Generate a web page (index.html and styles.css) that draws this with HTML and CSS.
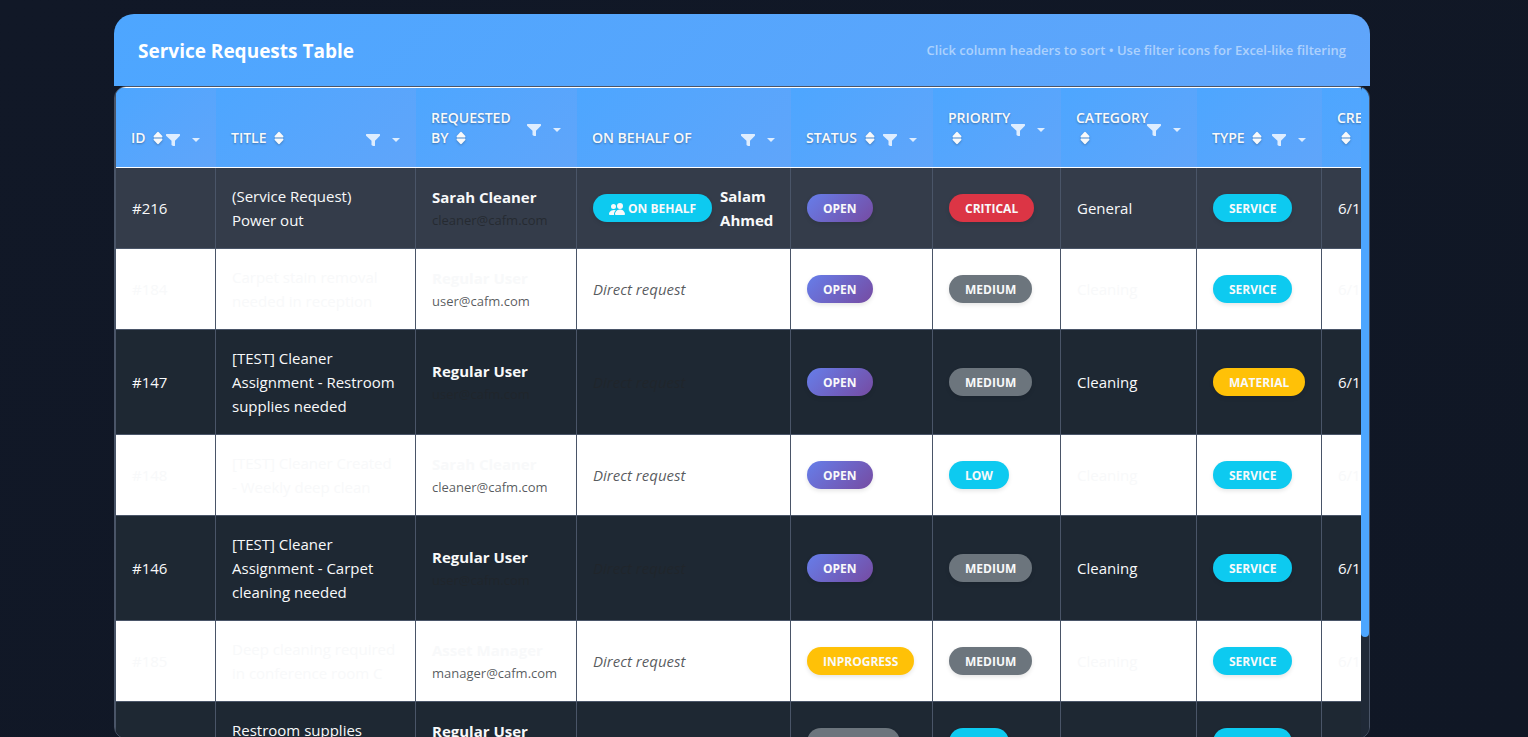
FILE: index.html
```html
<!DOCTYPE html>
<html lang="en">
<head>
<meta charset="utf-8">
<title>Service Requests Table</title>
<link rel="stylesheet" href="styles.css">
</head>
<body>
<svg class="sprite" aria-hidden="true">
  <symbol id="sort" viewBox="0 0 10 14"><path d="M5 .8q.4 0 .8.400L9.300 5q.6 1.300-.6 1.400H1.300Q.1 6.300.7 5L4.200 1.200Q4.600.8 5 .8zM1.300 7.600h7.400q1.200.1.600 1.400L5.800 12.800q-.8.800-1.600 0L.7 9q-.6-1.300.6-1.400z"/></symbol>
  <symbol id="funnel" viewBox="0 0 14 12"><path d="M.5 0h13q.5 0 .5.500v1q0 .3-.3.600L9 6.800V11.500q0 .5-.5.500H7L5.500 11V6.800L.3 2.100Q0 1.800 0 1.500v-1Q0 0 .5 0z"/></symbol>
  <symbol id="people" viewBox="0 0 16 14"><path d="M7 13s-1 0-1-1 1-4.500 5-4.500 5 3.500 5 4.500-1 1-1 1zm4-6a3 3 0 1 0 0-6 3 3 0 0 0 0 6M5.200 13A2.200 2.200 0 0 1 5 12c0-1.400.7-2.800 1.900-3.700A6.300 6.300 0 0 0 5 8c-4 0-5 3-5 4s1 1 1 1zM4.500 7a2.500 2.500 0 1 0 0-5 2.500 2.500 0 0 0 0 5"/></symbol>
</svg>
<main class="card">
  <header class="card-header">
    <h1>Service Requests Table</h1>
    <small>Click column headers to sort • Use filter icons for Excel-like filtering</small>
  </header>
  <div class="table-frame">
    <div class="table-scroll">
      <table>
        <colgroup><col class="c-id"><col class="c-title"><col class="c-by"><col class="c-behalf"><col class="c-status"><col class="c-priority"><col class="c-category"><col class="c-type"><col class="c-created"></colgroup>
        <thead>
          <tr>
            <th><div class="head"><span>ID <svg class="sort"><use href="#sort"/></svg></span><button class="filter" aria-label="Filter ID"><svg class="funnel"><use href="#funnel"/></svg></button></div></th>
            <th><div class="head"><span>Title <svg class="sort"><use href="#sort"/></svg></span><button class="filter" aria-label="Filter title"><svg class="funnel"><use href="#funnel"/></svg></button></div></th>
            <th><div class="head"><span>Requested<br>By <svg class="sort"><use href="#sort"/></svg></span><button class="filter" aria-label="Filter requested by"><svg class="funnel"><use href="#funnel"/></svg></button></div></th>
            <th><div class="head"><span>On Behalf Of</span><button class="filter" aria-label="Filter on behalf of"><svg class="funnel"><use href="#funnel"/></svg></button></div></th>
            <th><div class="head"><span>Status <svg class="sort"><use href="#sort"/></svg></span><button class="filter" aria-label="Filter status"><svg class="funnel"><use href="#funnel"/></svg></button></div></th>
            <th><div class="head"><span>Priority<br><svg class="sort"><use href="#sort"/></svg></span><button class="filter" aria-label="Filter priority"><svg class="funnel"><use href="#funnel"/></svg></button></div></th>
            <th><div class="head"><span>Category<br><svg class="sort"><use href="#sort"/></svg></span><button class="filter" aria-label="Filter category"><svg class="funnel"><use href="#funnel"/></svg></button></div></th>
            <th><div class="head"><span>Type <svg class="sort"><use href="#sort"/></svg></span><button class="filter" aria-label="Filter type"><svg class="funnel"><use href="#funnel"/></svg></button></div></th>
            <th><div class="head"><span>Created<br><svg class="sort"><use href="#sort"/></svg></span><button class="filter" aria-label="Filter created"><svg class="funnel"><use href="#funnel"/></svg></button></div></th>
          </tr>
        </thead>
        <tbody>
          <tr class="hovered">
            <td>#216</td><td>(Service Request) Power out</td>
            <td><strong>Sarah Cleaner</strong><small>cleaner@cafm.com</small></td>
            <td><div class="behalf"><span class="badge info"><svg class="people"><use href="#people"/></svg>On Behalf</span><strong>Salam Ahmed</strong></div></td>
            <td><span class="badge open">Open</span></td><td><span class="badge danger">Critical</span></td>
            <td>General</td><td><span class="badge info">Service</span></td><td>6/1</td>
          </tr>
          <tr class="light">
            <td>#184</td><td>Carpet stain removal needed in reception</td>
            <td><strong>Regular User</strong><small>user@cafm.com</small></td>
            <td><em>Direct request</em></td>
            <td><span class="badge open">Open</span></td><td><span class="badge neutral">Medium</span></td>
            <td>Cleaning</td><td><span class="badge info">Service</span></td><td>6/1</td>
          </tr>
          <tr>
            <td>#147</td><td>[TEST] Cleaner Assignment - Restroom supplies needed</td>
            <td><strong>Regular User</strong><small>user@cafm.com</small></td>
            <td><em>Direct request</em></td>
            <td><span class="badge open">Open</span></td><td><span class="badge neutral">Medium</span></td>
            <td>Cleaning</td><td><span class="badge warning">Material</span></td><td>6/1</td>
          </tr>
          <tr class="light">
            <td>#148</td><td>[TEST] Cleaner Created - Weekly deep clean</td>
            <td><strong>Sarah Cleaner</strong><small>cleaner@cafm.com</small></td>
            <td><em>Direct request</em></td>
            <td><span class="badge open">Open</span></td><td><span class="badge info">Low</span></td>
            <td>Cleaning</td><td><span class="badge info">Service</span></td><td>6/1</td>
          </tr>
          <tr>
            <td>#146</td><td>[TEST] Cleaner Assignment - Carpet cleaning needed</td>
            <td><strong>Regular User</strong><small>user@cafm.com</small></td>
            <td><em>Direct request</em></td>
            <td><span class="badge open">Open</span></td><td><span class="badge neutral">Medium</span></td>
            <td>Cleaning</td><td><span class="badge info">Service</span></td><td>6/1</td>
          </tr>
          <tr class="light">
            <td>#185</td><td>Deep cleaning required in conference room C</td>
            <td><strong>Asset Manager</strong><small>manager@cafm.com</small></td>
            <td><em>Direct request</em></td>
            <td><span class="badge warning">InProgress</span></td><td><span class="badge neutral">Medium</span></td>
            <td>Cleaning</td><td><span class="badge info">Service</span></td><td>6/1</td>
          </tr>
          <tr>
            <td></td><td>Restroom supplies needed</td>
            <td><strong>Regular User</strong><small>user@cafm.com</small></td>
            <td><em>Direct request</em></td>
            <td><span class="badge neutral">Resolved</span></td><td><span class="badge info">Low</span></td>
            <td>Cleaning</td><td><span class="badge info">Service</span></td><td>6/1</td>
          </tr>
        </tbody>
      </table>
    </div>
    <div class="track"><div class="thumb"></div></div>
  </div>
</main>
</body>
</html>
```

FILE: styles.css
```css
* { box-sizing: border-box; }

body {
  margin: 0;
  height: 100vh;
  overflow: hidden;
  padding: 14px 158px 0 114px;
  background: linear-gradient(135deg, #111827, #101725);
  color: #f8f9fa;
  font-family: "Segoe UI", "Open Sans", "Noto Sans", sans-serif;
  font-size: 15px;
  line-height: 24px;
}

svg { fill: currentColor; }
.sprite { display: none; }

.card-header {
  display: flex;
  justify-content: space-between;
  align-items: center;
  height: 72px;
  padding: 0 24px;
  border-radius: 20px 20px 0 0;
  background: linear-gradient(135deg, #4da6ff, #60a5fa);
}

h1 {
  margin: 0;
  padding-top: 2px;
  font-size: 19px;
  font-weight: 700;
  line-height: 24px;
  color: #fff;
}

.card-header small {
  font-size: 13px;
  font-weight: 600;
  color: rgba(255, 255, 255, .5);
}

.table-frame {
  display: flex;
  height: 653px;
  overflow: hidden;
  border: 1px solid #4a5568;
  border-radius: 12px;
  background: #1e2833;
}

.table-scroll {
  flex: 1;
  min-width: 0;
  overflow: auto;
  scrollbar-width: none;
}

.track { flex: 0 0 8px; background: #1f2937; }
.thumb { height: 550px; border-radius: 4px; background: #4da6ff; }

table {
  width: 1372px;
  table-layout: fixed;
  border-collapse: separate;
  border-spacing: 0;
  border-left: 1px solid #4a5568;
}

.c-id { width: 100px; }
.c-title { width: 200px; }
.c-by { width: 161px; }
.c-behalf { width: 214px; }
.c-status { width: 142px; }
.c-priority { width: 128px; }
.c-category { width: 136px; }
.c-type { width: 125px; }
.c-created { width: 165px; }

th {
  position: sticky;
  top: 0;
  height: 81px;
  padding: 20px 16px 19px 15px;
  border-top: 1px solid #fff;
  border-bottom: 1px solid #fff;
  background: linear-gradient(135deg, #4da6ff, #60a5fa);
  color: #f8f9fa;
  font-size: 14px;
  font-weight: 600;
  line-height: 20px;
  text-align: left;
  text-transform: uppercase;
  text-shadow: 0 1px 2px rgba(0, 0, 0, .3);
  vertical-align: bottom;
}

.head {
  display: flex;
  justify-content: space-between;
  align-items: center;
}

.head span { flex: 1; min-width: 0; white-space: nowrap; }

.sort {
  width: 10px;
  height: 14px;
  margin-left: 4px;
  vertical-align: -2px;
  filter: drop-shadow(0 1px 1px rgba(0, 0, 0, .25));
}

.filter {
  display: flex;
  flex: 0 0 34px;
  justify-content: space-between;
  align-items: center;
  height: 20px;
  padding: 4px 0 0;
  border: 0;
  background: none;
  color: rgba(255, 255, 255, .8);
}

.filter::after {
  content: "";
  border: 4px solid transparent;
  border-top-color: currentColor;
  border-bottom: 0;
}

.funnel { width: 14px; height: 12px; }

td {
  padding: 16px;
  border-right: 1px solid #4a5568;
  border-bottom: 1px solid #4a5568;
  background: #1e2833;
  vertical-align: middle;
}

.hovered td { background: #343c4a; }
.light td { background: #fff; }

td strong { font-weight: 700; }
td > strong, td > small { display: block; }
td small { font-size: 13px; line-height: 22px; color: rgba(33, 37, 41, .75); }
td em { color: rgba(33, 37, 41, .75); }

.behalf { display: flex; align-items: center; gap: 8px; }

.badge {
  display: inline-block;
  padding: 7px 16px 5px;
  border-radius: 14px;
  box-shadow: 0 2px 4px rgba(0, 0, 0, .1);
  color: #f8f9fa;
  font-size: 12px;
  font-weight: 700;
  line-height: 16px;
  text-transform: uppercase;
  white-space: nowrap;
  vertical-align: middle;
}

.people { width: 16px; height: 14px; margin-right: 3px; vertical-align: -3px; }

.open { background: linear-gradient(135deg, #667eea, #764ba2); }
.info { background: #0dcaf0; }
.danger { background: #dc3545; }
.neutral { background: #6c757d; }
.warning { background: #ffc107; }
```
